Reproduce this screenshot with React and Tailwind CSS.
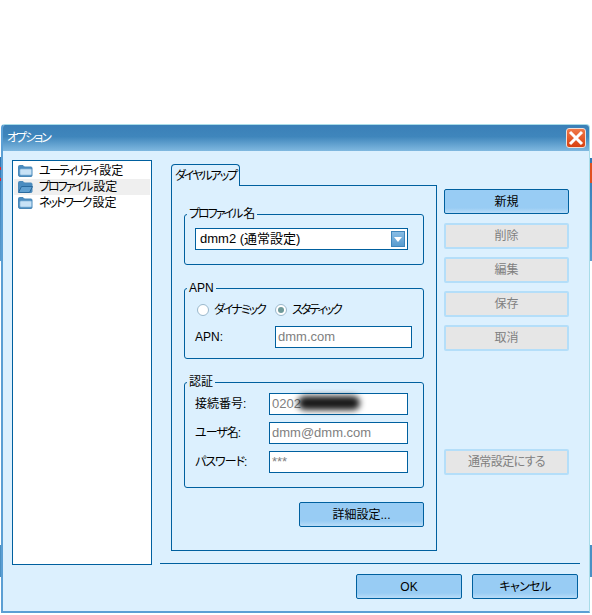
function Kana({ children }) {
  return <span className="tracking-[-2px]">{children}</span>;
}

function Folder({ open }) {
  return (
    <svg width="15" height="12" viewBox="0 0 15 12" className="shrink-0">
      <path d="M.5 3V1.500a1 1 0 0 1 1-1h3.500l1.500 1.500h6.500a1 1 0 0 1 1 1v7.500a1 1 0 0 1-1 1h-11a1.500 1.500 0 0 1-1.500-1.500z" fill="#4a8cc0" stroke="#4a88b8" />
      {open ? (
        <path d="M.5 11.500l3-6h11l-3 6z" fill="#5f9fd0" stroke="#2a6a9e" />
      ) : (
        <rect x="2" y="4" width="11.500" height="6" rx="1" fill="#c8e2f6" stroke="#8ab8da" strokeWidth="0.7" />
      )}
    </svg>
  );
}

function TreeItem({ kana, open, active }) {
  return (
    <div className={`mx-px flex h-4 items-center gap-[6px] pl-[4px] text-xs text-black ${active ? "bg-[#efefef]" : ""}`}>
      <Folder open={open} />
      <span><Kana>{kana}</Kana><span className="pl-[2px]">設定</span></span>
    </div>
  );
}

function Group({ title, className, children }) {
  return (
    <div className={`relative rounded-[3px] border border-[#00609f] ${className}`}>
      <span className="absolute -top-[9px] left-[2px] bg-[#dcf0fe] px-[2px] text-xs leading-4 text-black">{title}</span>
      {children}
    </div>
  );
}

function Button({ children, disabled, className = "" }) {
  if (disabled) {
    return (
      <div className={`flex h-[26px] w-[125px] items-center justify-center rounded-[2px] border-2 border-[#b4def9] bg-[#e6e6e6] text-xs text-[#808080] ${className}`}>
        {children}
      </div>
    );
  }
  return (
    <div className={`flex h-[25px] items-center justify-center rounded-[2px] border border-[#00609f] bg-[linear-gradient(#98ccf4_78%,#b8dcf8)] text-xs text-black ${className}`}>
      {children}
    </div>
  );
}

function Field({ value, className = "" }) {
  return (
    <div className={`flex h-[22px] items-center border border-[#00609f] bg-white pl-[2px] text-[13px] text-[#808080] ${className}`}>
      {value}
    </div>
  );
}

function Radio({ label, checked, className = "" }) {
  return (
    <div className={`flex items-center gap-[5px] whitespace-nowrap ${className}`}>
      <span className="flex size-3 items-center justify-center rounded-full border border-[#9ab8cc] bg-white">
        {checked && <span className="size-[6px] rounded-full bg-[#6f9a9a]" />}
      </span>
      <span className="text-xs text-black"><Kana>{label}</Kana></span>
    </div>
  );
}

export default function App() {
  return (
    <div className="relative h-[615px] w-[592px] overflow-hidden bg-white pt-[124px] font-['Liberation_Sans','Noto_Sans_CJK_JP',sans-serif] [font-feature-settings:'palt']">
      {/* window behind the dialog, only its edges show */}
      <div className="absolute left-0 top-[157px] h-[104px] w-[2px] bg-[linear-gradient(#2f78b4,#5a9ccf)]" />
      <div className="absolute left-0 top-[167px] h-[3px] w-[2px] bg-[#e82020]" />
      <div className="absolute left-0 top-[178px] h-[3px] w-[2px] bg-[#e82020]" />
      <div className="absolute left-0 top-[545px] h-[32px] w-[2px] bg-[#4a90c4]" />
      <div className="absolute right-0 top-[158px] h-[103px] w-[2px] bg-[linear-gradient(#2f78b4,#5a9ccf)]" />
      <div className="absolute right-0 top-[163px] h-[20px] w-[2px] bg-[#e05020]" />
      <div className="absolute right-0 top-[545px] h-[32px] w-[2px] bg-[#4a90c4]" />

      <div className="relative ml-px flex h-[489px] w-[589px] flex-col overflow-hidden rounded-t-[4px] border-2 border-t-1 border-r-1 border-[#5b9fd4] border-r-[#a8dce8] border-t-[#a8dce8] bg-[#dcf0fe]">
        <div className="flex h-[26px] shrink-0 items-center justify-between bg-[linear-gradient(#3a80b8,#3f86bc_45%,#80b8e0)] pl-[4px] pr-[3px] text-xs text-white">
          <Kana>オプション</Kana>
          <span className="flex h-5 w-5 items-center justify-center rounded-[3px] border border-[#f0e0d8] bg-[linear-gradient(#f07848,#d84010)]">
            <svg width="16" height="16" viewBox="0 0 16 16">
              <path d="M2 2L14 14M14 2L2 14" stroke="#fff" strokeWidth="3" />
            </svg>
          </span>
        </div>

        <div className="flex h-[412px] shrink-0 pl-[9px] pt-[9px]">
          <div className="h-[405px] w-[140px] shrink-0 border border-[#00609f] bg-white pt-[2px]">
            <TreeItem kana="ユーティリティ" />
            <TreeItem kana="プロファイル" open active />
            <TreeItem kana="ネットワーク" />
          </div>

          <div className="ml-[19px] flex w-[266px] shrink-0 flex-col pt-[4px]">
            <div className="z-10 -mb-px flex h-[22px] w-[69px] items-center justify-center whitespace-nowrap rounded-t-[4px] border border-b-0 border-[#00609f] bg-[#dcf0fe] text-xs text-black">
              <Kana>ダイヤルアップ</Kana>
            </div>
            <div className="flex h-[366px] flex-col border border-[#00609f] px-3 pt-[28px]">
              <Group title={<><Kana>プロファイル</Kana><span className="pl-[2px]">名</span></>} className="h-[51px] w-[240px] pl-[10px] pt-[13px]">
                <div className="flex h-[22px] w-[213px] items-center justify-between border border-[#00609f] bg-white pl-[4px] pr-[2px] text-[13px] text-black">
                  <span>dmm2 (通常設定)</span>
                  <span className="flex h-4 w-[14px] items-center justify-center border border-[#3f86bc] bg-[linear-gradient(#88bce4,#5a9ccf)]">
                    <span className="border-x-4 border-t-[5px] border-x-transparent border-t-white" />
                  </span>
                </div>
              </Group>

              <Group title="APN" className="mt-[23px] h-[71px] w-[240px] pl-[12px] pt-[13px]">
                <div className="flex">
                  <Radio label="ダイナミック" className="w-[78px]" />
                  <Radio label="スタティック" checked />
                </div>
                <div className="mt-[8px] flex items-center">
                  <span className="-ml-[2px] w-[80px] text-xs text-black">APN:</span>
                  <Field value="dmm.com" className="w-[137px]" />
                </div>
              </Group>

              <Group title="認証" className="mt-[23px] h-[106px] w-[240px] pl-[10px] pt-[10px]">
                <div className="flex flex-col gap-[7px]">
                  <div className="flex items-center">
                    <span className="w-[74px] text-xs text-black">接続番号:</span>
                    <div className="relative">
                      <Field value="0202" className="w-[139px]" />
                      <span className="absolute left-[29px] top-[3px] h-[14px] w-[62px] rounded-full bg-black/90 blur-[3px]" />
                    </div>
                  </div>
                  <div className="flex items-center">
                    <span className="w-[74px] text-xs tracking-[-1px] text-black">ユーザ名:</span>
                    <Field value="dmm@dmm.com" className="w-[139px]" />
                  </div>
                  <div className="flex items-center">
                    <span className="w-[74px] text-xs tracking-[-1px] text-black">パスワード:</span>
                    <Field value="***" className="w-[139px]" />
                  </div>
                </div>
              </Group>

              <Button className="ml-[115px] mt-[14px] w-[125px]">詳細設定...</Button>
            </div>
          </div>

          <div className="ml-[7px] flex flex-col pt-[29px]">
            <Button className="w-[125px]">新規</Button>
            <div className="mt-[9px] flex flex-col gap-2">
              <Button disabled>削除</Button>
              <Button disabled>編集</Button>
              <Button disabled>保存</Button>
              <Button disabled>取消</Button>
            </div>
            <Button disabled className="mt-[98px] tracking-[-0.6px]">通常設定にする</Button>
          </div>
        </div>

        <div className="ml-[157px] mr-[9px] border-t border-[#00609f]" />
        <div className="mt-[10px] flex justify-end gap-[10px] pr-[11px]">
          <Button className="w-[106px]">OK</Button>
          <Button className="w-[106px] tracking-[-0.6px]">キャンセル</Button>
        </div>
      </div>
    </div>
  );
}
